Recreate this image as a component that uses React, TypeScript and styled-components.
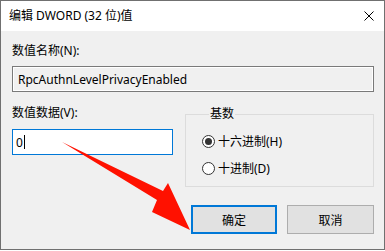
import React from "react";
import styled, { createGlobalStyle } from "styled-components";

const Global = createGlobalStyle`
  html, body { margin: 0; padding: 0; background: #ffffff; }
  body {
    font-family: "Noto Sans", "Noto Sans CJK SC", sans-serif;
    font-size: 12px;
    color: #000;
  }
  * { box-sizing: border-box; }
`;

const Window = styled.div`
  position: relative;
  width: 385px;
  height: 250px;
  border: 1px solid #707070;
  display: flex;
  flex-direction: column;
  background: #f0f0f0;
`;

const TitleBar = styled.div`
  height: 30px;
  background: #ffffff;
  display: flex;
  align-items: center;
  justify-content: space-between;
  padding: 0 9px 0 8px;
  font-size: 12px;
`;

const Title = styled.span`
  line-height: 16px;
`;

const CloseIcon = styled.svg`
  width: 10px;
  height: 10px;
  margin-right: 1px;
`;

const Body = styled.div`
  flex: 1;
  padding: 12px 10px 0 11px;
  display: flex;
  flex-direction: column;
`;

const Label = styled.div`
  line-height: 16px;
  height: 16px;
`;

const NameBox = styled.div`
  margin-top: 7px;
  height: 26px;
  border: 1px solid #7a7a7a;
  box-shadow: inset 0 0 0 1px #ffffff;
  background: #f0f0f0;
  display: flex;
  align-items: center;
  padding-left: 5px;
`;

const Row = styled.div`
  margin-top: 13px;
  display: flex;
  gap: 12px;
  align-items: flex-start;
`;

const LeftCol = styled.div`
  width: 161px;
  display: flex;
  flex-direction: column;
`;

const ValueBox = styled.div`
  margin-top: 8px;
  height: 26px;
  border: 1px solid #0078d7;
  background: #ffffff;
  display: flex;
  align-items: center;
  padding-left: 3px;
`;

const Caret = styled.span`
  display: inline-block;
  width: 1px;
  height: 14px;
  background: #000;
  margin-left: 1px;
`;

const Group = styled.fieldset`
  flex: 1;
  margin: 1px 0 0 0;
  height: 81px;
  border: 1px solid #dcdcdc;
  padding: 11px 0 0 16px;
  display: flex;
  flex-direction: column;
  gap: 11px;
`;

const Legend = styled.legend`
  padding: 0 1px;
  margin-left: 7px;
  line-height: 16px;
`;

const RadioRow = styled.div`
  display: flex;
  align-items: center;
  height: 16px;
  gap: 3px;
`;

const RadioCircle = styled.span<{ $checked?: boolean }>`
  width: 13px;
  height: 13px;
  border-radius: 50%;
  border: 1px solid #333333;
  background: #ffffff;
  display: flex;
  align-items: center;
  justify-content: center;
  &::after {
    content: "";
    width: 7px;
    height: 7px;
    border-radius: 50%;
    background: ${(p) => (p.$checked ? "#333333" : "transparent")};
  }
`;

const Buttons = styled.div`
  margin-top: 18px;
  display: flex;
  justify-content: flex-end;
  gap: 10px;
`;

const Button = styled.div<{ $default?: boolean }>`
  width: ${(p) => (p.$default ? "86px" : "87px")};
  height: 29px;
  background: #e1e1e1;
  border: ${(p) => (p.$default ? "2px solid #0078d7" : "1px solid #adadad")};
  display: flex;
  align-items: center;
  justify-content: center;
`;

const Arrow = styled.svg`
  position: absolute;
  left: -1px;
  top: -1px;
  width: 385px;
  height: 251px;
  pointer-events: none;
`;

export default function App() {
  return (
    <>
      <Global />
      <Window>
        <TitleBar>
          <Title>编辑 DWORD (32 位)值</Title>
          <CloseIcon viewBox="0 0 10 10">
            <path d="M0.5 0.5 L9.5 9.5 M9.5 0.5 L0.5 9.5" stroke="#000" strokeWidth="1" fill="none" />
          </CloseIcon>
        </TitleBar>
        <Body>
          <Label>数值名称(N):</Label>
          <NameBox>RpcAuthnLevelPrivacyEnabled</NameBox>
          <Row>
            <LeftCol>
              <Label>数值数据(V):</Label>
              <ValueBox>
                0<Caret />
              </ValueBox>
            </LeftCol>
            <Group>
              <Legend>基数</Legend>
              <RadioRow>
                <RadioCircle $checked />
                <span>十六进制(H)</span>
              </RadioRow>
              <RadioRow>
                <RadioCircle />
                <span>十进制(D)</span>
              </RadioRow>
            </Group>
          </Row>
          <Buttons>
            <Button $default>确定</Button>
            <Button>取消</Button>
          </Buttons>
        </Body>
        <Arrow viewBox="0 0 385 251">
          <polygon
            points="62,142 163,191 168,183 190,230 152,212 157,200"
            fill="#ff1100"
          />
        </Arrow>
      </Window>
    </>
  );
}
